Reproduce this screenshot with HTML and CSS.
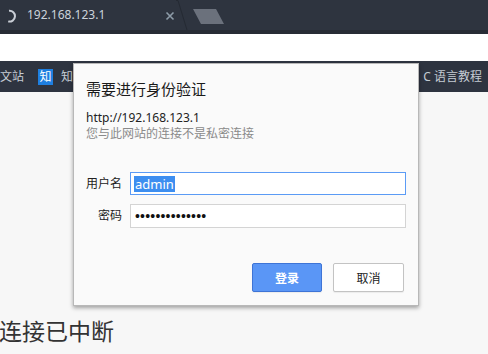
FILE: index.html
```html
<!DOCTYPE html>
<html lang="zh-CN">
<head>
<meta charset="utf-8">
<title>192.168.123.1</title>
<link rel="stylesheet" href="styles.css">
</head>
<body>
<div class="tabstrip">
  <div class="tab">
    <svg class="spinner" width="12" height="14" viewBox="0 0 12 14"><path d="M3 1.8 A5.4 5.4 0 1 1 2.2 12.4" fill="none" stroke="#c9ced6" stroke-width="2"/></svg>
    <span class="tab-title">192.168.123.1</span>
    <svg class="tab-close" width="10" height="10" viewBox="0 0 10 10"><path d="M1.5 1.5 L8.5 8.5 M8.5 1.5 L1.5 8.5" stroke="#8d9ca8" stroke-width="1.6"/></svg>
    <svg class="tab-edge" width="14" height="30" viewBox="0 0 14 30"><path d="M0 0.5 L2 0.5 L11 30" fill="none" stroke="#252a33" stroke-width="1"/></svg>
  </div>
  <svg class="newtab" width="34" height="18" viewBox="0 0 34 18"><path d="M1 1 L24 1 L32 16 L9 16 Z" fill="#6b717c"/></svg>
</div>
<div class="toolbar-line"></div>
<div class="addressbar"></div>
<div class="bookmarks">
  <span class="bm bm-first">文站</span>
  <span class="bm-icon">知</span>
  <span class="bm">知</span>
  <span class="bm bm-right">C 语言教程</span>
</div>
<main class="content">
  <h1 class="error-title">连接已中断</h1>
</main>

<div class="dialog">
  <div class="dlg-title">需要进行身份验证</div>
  <div class="dlg-url">http://192.168.123.1</div>
  <div class="dlg-note">您与此网站的连接不是私密连接</div>
  <div class="form">
    <div class="row">
      <span class="label">用户名</span>
      <div class="field focused"><span class="sel">admin</span></div>
    </div>
    <div class="row">
      <span class="label">密码</span>
      <div class="field"><span class="dots">••••••••••••••</span></div>
    </div>
  </div>
  <div class="buttons">
    <button class="btn primary">登录</button>
    <button class="btn">取消</button>
  </div>
</div>
</body>
</html>
```

FILE: styles.css
```css
* { box-sizing: border-box; }
html, body { margin: 0; padding: 0; }
body {
  width: 488px;
  height: 354px;
  overflow: hidden;
  background: #f7f7f7;
  font-family: "Noto Sans", "Noto Sans CJK SC", sans-serif;
  position: relative;
}
.tabstrip {
  height: 30px;
  background: #2e343f;
  display: flex;
  align-items: flex-start;
}
.tab {
  position: relative;
  width: 192px;
  height: 30px;
  display: flex;
  align-items: center;
  padding-left: 6px;
}
.spinner { flex: none; margin-top: 1px; }
.tab-title {
  margin-left: 9px;
  font-size: 12px;
  color: #cbd3db;
  line-height: 16px;
  flex: 1;
}
.tab-close { flex: none; margin-right: 17px; margin-top: 1px; }
.tab-edge { position: absolute; right: 2px; top: 0; }
.newtab { flex: none; margin-top: 8px; margin-left: 0; }
.toolbar-line {
  height: 4px;
  background: #272c35;
}
.addressbar {
  height: 27px;
  background: #ffffff;
}
.bookmarks {
  height: 31px;
  background: #2e3440;
  display: flex;
  align-items: center;
  font-size: 12px;
  color: #c5ccd4;
  line-height: 16px;
}
.bm-first { margin-left: 0; }
.bm-icon {
  margin-left: 14px;
  width: 15px;
  height: 16px;
  background: #1e7fe0;
  color: #ffffff;
  font-size: 12px;
  line-height: 16px;
  text-align: center;
}
.bm { white-space: nowrap; }
.bm-icon + .bm { margin-left: 8px; }
.bm-right { margin-left: auto; margin-right: 6px; font-size: 12px; }
.content { padding: 0; }
.error-title {
  margin: 225px 0 0 -1px;
  font-size: 23px;
  font-weight: normal;
  line-height: 28px;
  color: #333333;
}
.dialog {
  position: absolute;
  left: 73px;
  top: 63px;
  width: 346px;
  height: 243px;
  background: #fafafa;
  border: 1px solid #b8b8b8;
  box-shadow: 0 2px 4px rgba(0,0,0,0.35);
  padding: 15px 14px 0 12px;
}
.dlg-title {
  font-size: 15px;
  line-height: 20px;
  color: #1a1a1a;
}
.dlg-url {
  margin-top: 11px;
  font-size: 12px;
  line-height: 16px;
  color: #222222;
}
.dlg-note {
  font-size: 12px;
  line-height: 16px;
  color: #8a8a8a;
}
.form {
  margin-top: 30px;
  display: flex;
  flex-direction: column;
  gap: 9px;
}
.row {
  display: flex;
  align-items: center;
}
.label {
  flex: none;
  width: 36px;
  text-align: right;
  font-size: 12px;
  line-height: 16px;
  color: #222222;
  white-space: nowrap;
}
.field {
  flex: none;
  margin-left: 8px;
  width: 276px;
  height: 24px;
  background: #ffffff;
  border: 1px solid #d4d4d4;
  display: flex;
  align-items: center;
  padding-left: 3px;
}
.field.focused { border-color: #5b9bf5; height: 23px; }
.sel {
  background: #3d8ef0;
  color: #ffffff;
  font-size: 13px;
  line-height: 16px;
  padding: 0 1px;
}
.dots {
  font-family: "Liberation Sans", sans-serif;
  font-size: 14px;
  color: #111111;
  letter-spacing: 0.2px;
  line-height: 14px;
  padding-left: 1px;
}
.buttons {
  margin-top: 35px;
  display: flex;
  justify-content: flex-end;
  gap: 11px;
  padding-right: 0;
}
.btn {
  width: 71px;
  height: 29px;
  border: 1px solid #c3c3c3;
  border-radius: 2px;
  background: #ffffff;
  font-family: "Noto Sans CJK SC", sans-serif;
  font-size: 12px;
  color: #222222;
  padding: 0;
  box-shadow: 0 1px 1px rgba(0,0,0,0.06);
}
.btn.primary {
  width: 70px;
  background: #5a96f6;
  border-color: #3e74d6;
  color: #ffffff;
  font-weight: bold;
}
```
